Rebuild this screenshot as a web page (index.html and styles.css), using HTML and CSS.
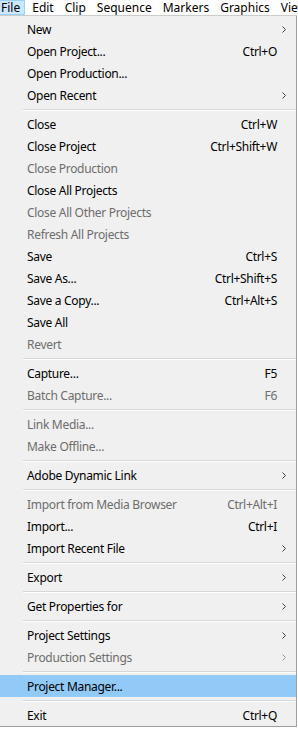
FILE: index.html
```html
<!DOCTYPE html>
<html lang="en">
<head>
  <meta charset="UTF-8" />
  <title>File menu</title>
  <link rel="stylesheet" href="styles.css">
</head>
<body>
  <div class="menubar">
    <span class="top active">File</span>
    <span class="top">Edit</span>
    <span class="top">Clip</span>
    <span class="top">Sequence</span>
    <span class="top">Markers</span>
    <span class="top">Graphics</span>
    <span class="top">View</span>
  </div>

  <div class="menu">
    <div class="item"><span>New</span><i class="arrow"></i></div>
    <div class="item"><span>Open Project...</span><b>Ctrl+O</b></div>
    <div class="item"><span>Open Production...</span></div>
    <div class="item"><span>Open Recent</span><i class="arrow"></i></div>
    <div class="sep"></div>

    <div class="item"><span>Close</span><b>Ctrl+W</b></div>
    <div class="item"><span>Close Project</span><b>Ctrl+Shift+W</b></div>
    <div class="item off"><span>Close Production</span></div>
    <div class="item"><span>Close All Projects</span></div>
    <div class="item off"><span>Close All Other Projects</span></div>
    <div class="item off"><span>Refresh All Projects</span></div>
    <div class="item"><span>Save</span><b>Ctrl+S</b></div>
    <div class="item"><span>Save As...</span><b>Ctrl+Shift+S</b></div>
    <div class="item"><span>Save a Copy...</span><b>Ctrl+Alt+S</b></div>
    <div class="item"><span>Save All</span></div>
    <div class="item off"><span>Revert</span></div>
    <div class="sep"></div>

    <div class="item"><span>Capture...</span><b>F5</b></div>
    <div class="item off"><span>Batch Capture...</span><b>F6</b></div>
    <div class="sep"></div>

    <div class="item off"><span>Link Media...</span></div>
    <div class="item off"><span>Make Offline...</span></div>
    <div class="sep"></div>

    <div class="item"><span>Adobe Dynamic Link</span><i class="arrow"></i></div>
    <div class="sep"></div>

    <div class="item off"><span>Import from Media Browser</span><b>Ctrl+Alt+I</b></div>
    <div class="item"><span>Import...</span><b>Ctrl+I</b></div>
    <div class="item"><span>Import Recent File</span><i class="arrow"></i></div>
    <div class="sep"></div>

    <div class="item"><span>Export</span><i class="arrow"></i></div>
    <div class="sep"></div>

    <div class="item"><span>Get Properties for</span><i class="arrow"></i></div>
    <div class="sep"></div>

    <div class="item"><span>Project Settings</span><i class="arrow"></i></div>
    <div class="item off"><span>Production Settings</span><i class="arrow"></i></div>
    <div class="sep"></div>

    <div class="item hover"><span>Project Manager...</span></div>
    <div class="sep"></div>

    <div class="item"><span>Exit</span><b>Ctrl+Q</b></div>
  </div>
</body>
</html>
```

FILE: styles.css
```css
body {
  margin: 0;
  width: 298px;
  background: #ffffff;
  font-family: "Noto Sans", "Open Sans", sans-serif;
  font-size: 12px;
  color: #000000;
  overflow: hidden;
}

.menubar {
  display: flex;
  height: 15px;
  white-space: nowrap;
  overflow: hidden;
}

.top {
  padding: 0 7px 0 1px;
  margin-right: 2px;
  line-height: 13px;
  border: 1px solid transparent;
  border-left: none;
}

.top.active {
  background: #cce8ff;
  border-color: #99d1ff;
  padding-right: 4px;
  margin-right: 6px;
}

.menu {
  width: 296px;
  background: #f0f0f0;
  border-top: 1px solid #cccccc;
  border-right: 1px solid #a0a0a0;
  border-bottom: 1px solid #a0a0a0;
  padding: 2px 0 0 0;
}

.item {
  display: flex;
  align-items: center;
  height: 22px;
  padding: 0 10px 0 27px;
  white-space: nowrap;
  letter-spacing: -0.3px;
}

.item span {
  flex: 1;
}

.item b {
  font-weight: normal;
  margin-right: 9px;
}

.item.off {
  color: #6d6d6d;
}

.item.hover {
  background: #91c9f7;
}

.arrow {
  width: 4px;
  height: 7px;
  background: no-repeat center / 4px 7px url("data:image/svg+xml;utf8,<svg xmlns='http://www.w3.org/2000/svg' width='4' height='7' viewBox='0 0 4 7'><path d='M0.5 0.5 L3.5 3.5 L0.5 6.5' fill='none' stroke='%23404040' stroke-width='1'/></svg>");
}

.off .arrow {
  opacity: 0.5;
}

.sep {
  height: 1px;
  margin: 3px 0 2px 23px;
  background: #d7d7d7;
  border-bottom: 1px solid #ffffff;
}
```
